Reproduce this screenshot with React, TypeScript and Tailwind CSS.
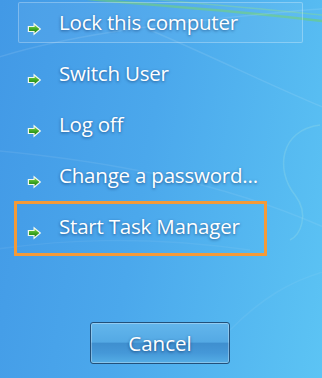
import React from "react";

function Arrow() {
  return (
    <svg width="15" height="14" viewBox="0 0 15 14" className="shrink-0">
      <defs>
        <linearGradient id="ag" x1="0" y1="0" x2="0" y2="1">
          <stop offset="0" stopColor="#8ad64c" />
          <stop offset="0.5" stopColor="#3fa824" />
          <stop offset="1" stopColor="#217f15" />
        </linearGradient>
      </defs>
      <path
        d="M0.8 4 H6.5 V0.6 L14.2 7 L6.5 13.4 V10 H0.8 Z"
        fill="#f2f8f0"
      />
      <path
        d="M2 5.1 H7.6 V3 L12.4 7 L7.6 11 V8.9 H2 Z"
        fill="url(#ag)"
      />
    </svg>
  );
}

function Row({ label, boxed }: { label: string; boxed?: boolean }) {
  return (
    <div
      className={
        boxed
          ? "ml-[18px] w-[285px] h-[41px] flex items-center rounded-[2px] border border-[rgba(255,255,255,0.28)] bg-[rgba(255,255,255,0.05)]"
          : "ml-[18px] w-[285px] h-[41px] flex items-center border border-transparent"
      }
    >
      <div className="pl-[8px] pt-[12px] flex">
        <Arrow />
      </div>
      <span className="ml-[17px] text-white text-[20.5px] leading-none tracking-[-0.2px] [text-shadow:0_1px_3px_rgba(0,30,80,0.55)] [font-family:'Open_Sans',sans-serif]">
        {label}
      </span>
    </div>
  );
}

export default function App() {
  return (
    <div className="relative w-[322px] h-[378px] overflow-hidden bg-[linear-gradient(100deg,#4299e6_0%,#4ba8ec_45%,#5cc4f4_100%)]">
      <svg
        className="absolute inset-0 pointer-events-none"
        width="322"
        height="378"
        viewBox="0 0 322 378"
      >
        <path d="M60 -4 C150 6 240 10 330 22" stroke="#6fd16a" strokeOpacity="0.55" strokeWidth="2.5" fill="none" />
        <path d="M140 -2 C200 4 260 8 330 16" stroke="#8fe37a" strokeOpacity="0.35" strokeWidth="1.5" fill="none" />
        <path d="M-10 60 C80 30 200 20 330 8" stroke="#ffffff" strokeOpacity="0.1" strokeWidth="1.5" fill="none" />
        <path d="M150 30 C220 60 280 90 330 110" stroke="#ffffff" strokeOpacity="0.1" strokeWidth="1.5" fill="none" />
        <path d="M-10 150 C100 160 220 180 330 230" stroke="#ffffff" strokeOpacity="0.08" strokeWidth="1.5" fill="none" />
        <path d="M320 125 C280 130 275 170 295 195 C310 215 300 235 290 240" stroke="#bff0e0" strokeOpacity="0.2" strokeWidth="1.5" fill="none" />
        <path d="M-10 250 C60 240 140 235 250 250" stroke="#ffffff" strokeOpacity="0.06" strokeWidth="1.5" fill="none" />
        <path d="M230 330 C260 300 290 280 330 270" stroke="#ffffff" strokeOpacity="0.06" strokeWidth="1.5" fill="none" />
      </svg>

      <div className="relative flex flex-col pt-[2px] gap-[10px]">
        <Row label="Lock this computer" boxed />
        <Row label="Switch User" />
        <Row label="Log off" />
        <Row label="Change a password..." />
        <Row label="Start Task Manager" />
      </div>

      <div className="absolute left-[14px] top-[201px] w-[253px] h-[55px] border-[3px] border-[#f49a38]" />

      <div className="relative mt-[75px] flex justify-center">
        <button className="ml-[-2px] w-[140px] h-[42px] rounded-[3px] border border-[#22507a] p-0 overflow-hidden shadow-[inset_0_0_0_1px_rgba(255,255,255,0.3)] bg-[linear-gradient(180deg,#63b6ec_0%,#54a9e4_48%,#3f8fcf_50%,#4598d8_75%,#55aee6_100%)] flex items-center justify-center">
          <span className="text-white text-[20.5px] leading-none [text-shadow:0_1px_3px_rgba(0,30,80,0.6)] [font-family:'Open_Sans',sans-serif]">
            Cancel
          </span>
        </button>
      </div>
    </div>
  );
}
